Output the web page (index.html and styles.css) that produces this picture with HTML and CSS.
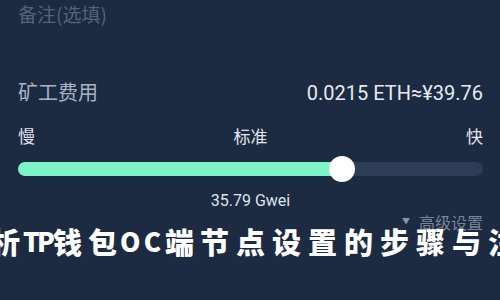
FILE: index.html
```html
<!DOCTYPE html>
<html lang="zh-CN">
<head>
<meta charset="utf-8">
<link rel="stylesheet" href="styles.css">
</head>
<body>
<div class="page">
  <div class="note">备注(选填)</div>
  <div class="fee-row">
    <span class="fee-label">矿工费用</span>
    <span class="fee-value">0.0215 ETH≈¥39.76</span>
  </div>
  <div class="speed-row">
    <span>慢</span>
    <span>标准</span>
    <span>快</span>
  </div>
  <div class="slider">
    <div class="track">
      <div class="fill" style="width:69.7%"></div>
      <div class="thumb" style="left:69.7%"></div>
    </div>
  </div>
  <div class="gwei">35.79 Gwei</div>
  <div class="advanced"><span class="caret">▼</span><span>高级设置</span></div>
</div>
<div class="overlay"><span class="g g-first">析</span><span class="g lt g-t">T</span><span class="g lt g-p">P</span><span class="g g-35">钱</span><span class="g g-32">包</span><span class="g lt g-o">O</span><span class="g lt g-c">C</span><span class="g g-35">端</span><span class="g">节</span><span class="g">点</span><span class="g">设</span><span class="g">置</span><span class="g">的</span><span class="g">步</span><span class="g">骤</span><span class="g">与</span><span class="g">注</span></div>
</body>
</html>
```
FILE: styles.css
```css
html, body {
  margin: 0;
  padding: 0;
  width: 500px;
  height: 300px;
  overflow: hidden;
  background: #1c2a42;
  font-family: "Noto Sans CJK SC", "Noto Sans", sans-serif;
}
.page {
  position: relative;
  padding: 0 17px 0 18px;
}
.note {
  height: 28px;
  line-height: 28px;
  font-size: 19px;
  color: #56627a;
}
.fee-row {
  margin-top: 50px;
  height: 28px;
  display: flex;
  justify-content: space-between;
  align-items: baseline;
}
.fee-label {
  font-size: 20px;
  line-height: 28px;
  color: #a9b3c3;
}
.fee-value {
  font-family: Roboto, "Noto Sans CJK SC", sans-serif;
  font-size: 20px;
  line-height: 28px;
  color: #e6eaf0;
}
.speed-row {
  margin-top: 19px;
  height: 22px;
  line-height: 22px;
  display: flex;
  justify-content: space-between;
  align-items: center;
  font-size: 17px;
  color: #e2e6ec;
}
.slider {
  margin-top: 9px;
  height: 26px;
  display: flex;
  align-items: center;
}
.track {
  position: relative;
  width: 100%;
  height: 14px;
  border-radius: 7px;
  background: #2e3c56;
}
.fill {
  height: 100%;
  border-radius: 7px;
  background: #7df4c6;
}
.thumb {
  position: absolute;
  top: 50%;
  width: 26px;
  height: 26px;
  margin: -13px 0 0 -13px;
  border-radius: 50%;
  background: #ffffff;
}
.gwei {
  margin-top: 9px;
  height: 20px;
  line-height: 20px;
  text-align: center;
  font-family: Roboto, sans-serif;
  font-size: 16px;
  color: #dfe3ea;
}
.advanced {
  margin-top: 1px;
  height: 20px;
  line-height: 20px;
  display: flex;
  justify-content: flex-end;
  align-items: center;
  gap: 9px;
  font-size: 16px;
  color: #7a8498;
}
.caret {
  font-size: 8px;
  line-height: 8px;
  color: #8c95a7;
  position: relative;
  top: -1px;
}
.overlay {
  position: absolute;
  left: -9px;
  top: 223px;
  display: flex;
  align-items: center;
  white-space: nowrap;
  font-family: "Noto Sans CJK SC", sans-serif;
  font-weight: 900;
  font-size: 29px;
  line-height: 36px;
  color: #ffffff;
}
.g {
  flex: none;
  width: 36px;
  overflow: visible;
}
.g-first { width: 32px; }
.g-35 { width: 35px; }
.g-32 { width: 32px; }
.lt { font-size: 26px; text-align: center; }
.g-t { width: 14px; }
.g-p { width: 16px; }
.g-o { width: 20px; }
.g-c { width: 25px; }
```
